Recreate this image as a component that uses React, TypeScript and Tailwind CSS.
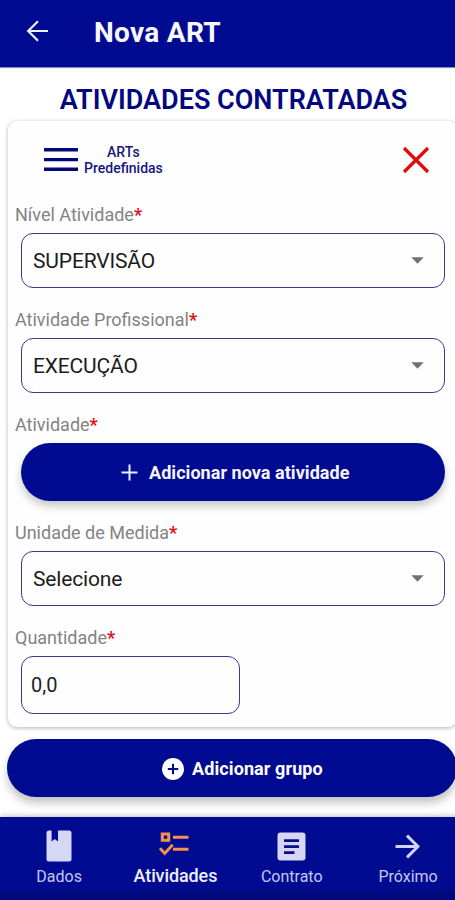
import type { ReactNode } from 'react';

function Label({ children }: { children: ReactNode }) {
    return (
        <div className="h-[28px] pl-[15px] text-[18px] leading-[20px] text-[#838383] whitespace-nowrap">
            {children}
            <span className="font-bold text-[#e2101a]">*</span>
        </div>
    );
}

function Select({ label, value }: { label: string; value: string }) {
    return (
        <div className="h-[105px]">
            <Label>{label}</Label>
            <div className="ml-[21px] flex h-[55px] w-[424px] items-center justify-between rounded-[12px] border border-[#3b3a8f] pl-[11px] pr-[20px]">
                <span className="text-[21px] leading-[24px] tracking-[-0.15px] text-[#1c1c1c]">{value}</span>
                <svg width="13" height="7" viewBox="0 0 13 7" fill="#717171">
                    <path d="M0.3 0.3h12.4L6.5 6.8z" />
                </svg>
            </div>
        </div>
    );
}

function NavItem({ label, active, children }: { label: string; active?: boolean; children: ReactNode }) {
    return (
        <div className="flex w-[116.3px] flex-col items-center">
            <div className="flex h-[58px] items-center justify-center">{children}</div>
            {active ? (
                <span className="-mt-[9px] text-[18px] leading-[20px] font-medium tracking-[-0.1px] text-[#eeeefc]">{label}</span>
            ) : (
                <span className="-mt-[8px] text-[16px] leading-[20px] text-[#c6c7ef]">{label}</span>
            )}
        </div>
    );
}

export default function App() {
    return (
        <div className="flex h-[900px] w-[455px] flex-col overflow-hidden bg-white font-['Roboto',sans-serif]">
            <header className="flex h-[67px] shrink-0 items-center bg-[#000b91] shadow-[0_1px_1px_#8c8ccb]">
                <svg className="mb-[5px] ml-[26px]" width="23" height="22" viewBox="0 0 23 22" fill="none" stroke="#f0f2ff" strokeWidth="2.2">
                    <path d="M22 11H2.5M12 1.2L2.2 11l9.8 9.8" />
                </svg>
                <h1 className="mb-[2px] ml-[45px] text-[28px] leading-[32px] font-bold tracking-[0.3px] text-[#f7f8ff]">Nova ART</h1>
            </header>

            <main className="flex h-[750px] shrink-0 flex-col">
                <h2 className="mt-[17px] ml-[12px] h-[37px] text-center text-[27px] leading-[33px] font-semibold whitespace-nowrap text-[#04087f]">
                    ATIVIDADES CONTRATADAS
                </h2>

                <section className="ml-[8px] h-[606px] w-[449px] shrink-0 rounded-[9px] bg-[#fefefe] shadow-[0_1px_4px_rgba(0,0,0,0.3)]">
                    <div className="-ml-[8px] w-[455px]">
                        <div className="flex h-[84px] items-start pt-[23px] pl-[44px]">
                            <svg className="mt-[4px]" width="34" height="24" viewBox="0 0 34 24" fill="#050876">
                                <path d="M0 0h34v3.4H0zM0 10h34v3.2H0zM0 19.6h34V23H0z" />
                            </svg>
                            <div className="ml-[6px] text-center text-[14px] leading-[16px] font-medium text-[#15157c]">
                                ARTs
                                <br />
                                Predefinidas
                            </div>
                            <svg className="mt-[2px] ml-[239px]" width="28" height="28" viewBox="0 0 28 28" stroke="#e20a0a" strokeWidth="3.2">
                                <path d="M2 2l24 24M26 2L2 26" />
                            </svg>
                        </div>

                        <Select label="Nível Atividade" value="SUPERVISÃO" />
                        <Select label="Atividade Profissional" value="EXECUÇÃO" />

                        <div className="h-[108px]">
                            <Label>Atividade</Label>
                            <button className="ml-[21px] flex h-[58px] w-[424px] items-center rounded-full bg-[#000b91] pl-[100px] text-[18px] font-bold text-[#f5f6ff] shadow-[0_5px_8px_rgba(0,0,0,0.22)]">
                                <svg width="17" height="17" viewBox="0 0 17 17" stroke="#eceeff" strokeWidth="2">
                                    <path d="M8.5 0.5v16M0.5 8.5h16" />
                                </svg>
                                <span className="ml-[11px] tracking-[0.05px] whitespace-nowrap">Adicionar nova atividade</span>
                            </button>
                        </div>

                        <Select label="Unidade de Medida" value="Selecione" />

                        <Label>Quantidade</Label>
                        <div className="ml-[21px] flex h-[58px] w-[219px] items-center rounded-[12px] border border-[#3b3a8f] pl-[9px] text-[20px] text-[#222]">
                            0,0
                        </div>
                    </div>
                </section>

                <button className="mt-[12px] ml-[7px] flex h-[58px] w-[450px] shrink-0 items-center rounded-full bg-[#000b91] pt-[2px] pl-[155px] text-[18px] font-bold text-white shadow-[0_6px_9px_rgba(0,0,0,0.24)]">
                    <svg width="22" height="22" viewBox="0 0 22 22">
                        <circle cx="11" cy="11" r="11" fill="#fff" />
                        <path d="M11 5.8v10.4M5.8 11h10.4" stroke="#000b91" strokeWidth="2" />
                    </svg>
                    <span className="-mt-[1px] ml-[8px] tracking-[0.1px] whitespace-nowrap">Adicionar grupo</span>
                </button>
            </main>

            <nav className="flex h-[83px] w-[467px] shrink-0 border-b-[10px] border-[#00087d] bg-[#000b91] pl-[1px] shadow-[0_-1px_6px_rgba(0,0,0,0.25)]">
                <NavItem label="Dados">
                    <svg width="26" height="32" viewBox="0 0 26 32" fill="#d6d6f5">
                        <path d="M3 0.5h2.6v11l3.2-2.6 3.2 2.6V0.5h11a2.5 2.5 0 0 1 2.5 2.5v26a2.5 2.5 0 0 1-2.5 2.5H3A2.5 2.5 0 0 1 0.5 29V3A2.5 2.5 0 0 1 3 0.5z" />
                    </svg>
                </NavItem>
                <NavItem label="Atividades" active>
                    <svg className="mr-[2px] mb-[4px]" width="30" height="24" viewBox="0 0 30 24" fill="none" stroke="#f2924e">
                        <path d="M3.3 1.9h6.4v6.4H3.3z" strokeWidth="3" />
                        <path d="M14 5.2h15.5M14 17.2h15.5" strokeWidth="3" />
                        <path d="M1 16.2l4.7 5.2 8-8.6" strokeWidth="3" />
                    </svg>
                </NavItem>
                <NavItem label="Contrato">
                    <svg width="29" height="29" viewBox="0 0 29 29">
                        <rect x="0.5" y="0.5" width="28" height="28" rx="3" fill="#d6d6f5" />
                        <path d="M7 8.6h15M7 14.6h15M7 20.6h10.5" stroke="#060d8e" strokeWidth="2.7" />
                    </svg>
                </NavItem>
                <NavItem label="Próximo">
                    <svg className="mr-[2px]" width="25" height="25" viewBox="0 0 25 25" fill="none" stroke="#d2d3f6" strokeWidth="3">
                        <path d="M0.5 12.5H22M12 1.6l10.9 10.9L12 23.4" />
                    </svg>
                </NavItem>
            </nav>
        </div>
    );
}
